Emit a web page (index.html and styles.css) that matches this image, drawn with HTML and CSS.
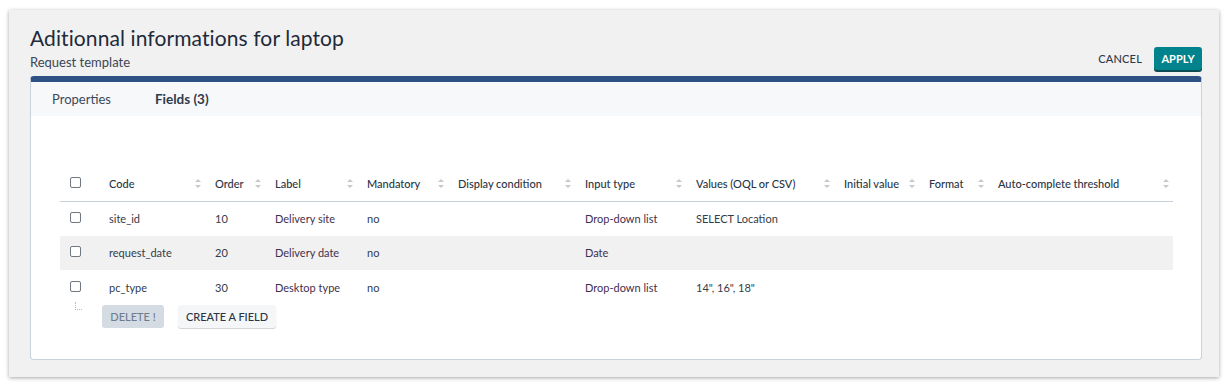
FILE: index.html
```html
<!DOCTYPE html>
<html lang="en">
<head>
<meta charset="utf-8">
<title>Aditionnal informations for laptop</title>
<link rel="stylesheet" href="styles.css">
</head>
<body>
<div class="dialog">
  <div class="head">
    <div class="titles">
      <h1 class="title">Aditionnal informations for laptop</h1>
      <div class="subtitle">Request template</div>
    </div>
    <div class="head-actions">
      <button class="btn-cancel">CANCEL</button>
      <button class="btn-apply">APPLY</button>
    </div>
  </div>
  <div class="card">
    <div class="tabs">
      <div class="tab">Properties</div>
      <div class="tab tab-active">Fields (3)</div>
    </div>
    <div class="card-body">
      <table class="grid">
        <colgroup>
          <col class="c-cb"><col class="c-code"><col class="c-order"><col class="c-label"><col class="c-mand"><col class="c-disp"><col class="c-input"><col class="c-values"><col class="c-init"><col class="c-format"><col class="c-auto">
        </colgroup>
        <thead>
          <tr>
            <th class="cb-cell"><span class="cb"></span></th>
            <th><div class="th-in"><span>Code</span><span class="sort"></span></div></th>
            <th><div class="th-in"><span>Order</span><span class="sort"></span></div></th>
            <th><div class="th-in"><span>Label</span><span class="sort"></span></div></th>
            <th><div class="th-in"><span>Mandatory</span><span class="sort"></span></div></th>
            <th><div class="th-in"><span>Display condition</span><span class="sort"></span></div></th>
            <th><div class="th-in"><span>Input type</span><span class="sort"></span></div></th>
            <th><div class="th-in"><span>Values (OQL or CSV)</span><span class="sort"></span></div></th>
            <th><div class="th-in"><span>Initial value</span><span class="sort"></span></div></th>
            <th><div class="th-in"><span>Format</span><span class="sort"></span></div></th>
            <th><div class="th-in"><span>Auto-complete threshold</span><span class="sort"></span></div></th>
          </tr>
        </thead>
        <tbody>
          <tr>
            <td class="cb-cell"><span class="cb"></span></td>
            <td>site_id</td><td>10</td><td class="dict">Delivery site</td><td>no</td><td></td><td class="dict">Drop-down list</td><td>SELECT Location</td><td></td><td></td><td></td>
          </tr>
          <tr class="odd">
            <td class="cb-cell"><span class="cb"></span></td>
            <td>request_date</td><td>20</td><td class="dict">Delivery date</td><td>no</td><td></td><td class="dict">Date</td><td></td><td></td><td></td><td></td>
          </tr>
          <tr>
            <td class="cb-cell"><span class="cb"></span></td>
            <td>pc_type</td><td>30</td><td class="dict">Desktop type</td><td>no</td><td></td><td class="dict">Drop-down list</td><td>14", 16", 18"</td><td></td><td></td><td></td>
          </tr>
        </tbody>
      </table>
      <div class="bulk">
        <span class="tree"></span>
        <button class="btn-delete">DELETE !</button>
        <button class="btn-create">CREATE A FIELD</button>
      </div>
    </div>
  </div>
</div>
</body>
</html>
```
FILE: styles.css
```css
* { box-sizing: border-box; }
html, body { margin: 0; padding: 0; background: #ffffff; }
body {
  font-family: "Lato", "Open Sans", "Liberation Sans", sans-serif;
  color: #2e3a4b;
  padding: 10px 9px 7px 9px;
}
button { font-family: inherit; cursor: pointer; }

.dialog {
  width: 1210px;
  height: 367px;
  background: #f1f1f1;
  box-shadow: 0 1px 4px rgba(0,0,0,0.35);
  padding: 7px 17px 0 21px;
}

.head {
  display: flex;
  justify-content: space-between;
  align-items: flex-end;
  height: 53px;
}
.title {
  margin: 0;
  font-size: 21px;
  font-weight: 400;
  line-height: 26px;
  color: #1f2a3a;
  letter-spacing: 0.1px;
}
.subtitle {
  font-size: 13px;
  line-height: 16px;
  margin-top: 3px;
  color: #3b4656;
}
.head-actions {
  display: flex;
  align-items: center;
  gap: 12px;
}
.btn-cancel {
  border: 0;
  background: transparent;
  font-size: 11px;
  font-weight: 500;
  color: #2e3a4b;
  padding: 0;
  letter-spacing: 0.2px;
}
.btn-apply {
  border: 0;
  background: #00838c;
  color: #ffffff;
  font-size: 11px;
  font-weight: 700;
  width: 48px;
  height: 23px;
  border-radius: 3px;
  box-shadow: 0 2px 0 #0b4d52;
  padding: 0;
}

.card {
  margin-top: 6px;
  background: #ffffff;
  border: 1px solid #c9d3de;
  border-top: 6px solid #2d5283;
  border-radius: 4px;
  height: 284px;
}
.tabs {
  display: flex;
  height: 34px;
  background: #f7f8fa;
  align-items: center;
  padding-left: 21px;
  gap: 44px;
}
.tab {
  font-size: 13px;
  color: #3c4858;
}
.tab-active {
  font-weight: 700;
  font-size: 13.5px;
  color: #2e3a4b;
}

.card-body {
  padding: 50px 28px 0 29px;
}
.grid {
  width: 1113px;
  table-layout: fixed;
  border-collapse: collapse;
  font-size: 11px;
}
.c-cb { width: 39px; }
.c-code { width: 106px; }
.c-order { width: 60px; }
.c-label { width: 92px; }
.c-mand { width: 91px; }
.c-disp { width: 127px; }
.c-input { width: 111px; }
.c-values { width: 148px; }
.c-init { width: 85px; }
.c-format { width: 69px; }
.c-auto { width: 185px; }

.grid th {
  height: 35px;
  font-weight: 500;
  text-align: left;
  padding: 0 4px 0 10px;
  border-bottom: 1px solid #c5d0dc;
  color: #2a3545;
  white-space: nowrap;
}
.th-in {
  display: flex;
  justify-content: space-between;
  align-items: center;
}
.sort {
  width: 6px;
  height: 9px;
  position: relative;
  flex: none;
}
.sort::before, .sort::after {
  content: "";
  position: absolute;
  left: 0;
  border-left: 3px solid transparent;
  border-right: 3px solid transparent;
}
.sort::before { top: 0; border-bottom: 3px solid #c4c9cf; }
.sort::after { bottom: 0; border-top: 3px solid #c4c9cf; }

.grid td {
  height: 34.5px;
  padding: 0 10px;
  color: #343c48;
  white-space: nowrap;
}
.grid td.dict { color: #3f3050; }
.grid tr.odd td { background: #f1f1f1; }
.grid .cb-cell { padding: 0 0 0 10px; }
.cb {
  display: block;
  width: 11px;
  height: 11px;
  border: 1px solid #6f7780;
  border-radius: 2px;
  background: #ffffff;
  margin-top: -2px;
}

.bulk {
  display: flex;
  align-items: flex-start;
  height: 27px;
  margin-top: -3px;
  padding-left: 15px;
}
.tree {
  width: 7px;
  height: 8px;
  border-left: 1px dotted #b7bcc2;
  border-bottom: 1px dotted #b7bcc2;
  margin-right: 20px;
}
.btn-delete, .btn-create {
  border: 0;
  height: 23px;
  margin-top: 3px;
  font-size: 11px;
  font-weight: 500;
  border-radius: 3px;
  padding: 0;
}
.btn-delete {
  width: 62px;
  background: #d4dbe2;
  color: #6f7e8f;
}
.btn-create {
  width: 98px;
  margin-left: 14px;
  background: #f4f6f8;
  color: #2a3545;
  box-shadow: 0 1px 1px rgba(0,0,0,0.18);
}
```
